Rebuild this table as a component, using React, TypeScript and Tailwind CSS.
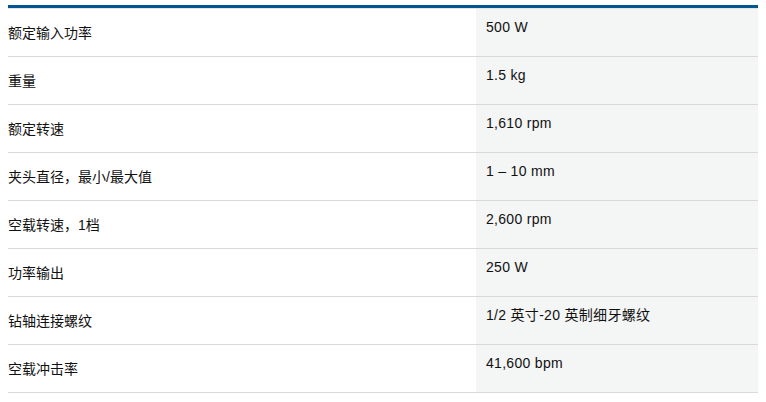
const specs = [
  { label: "额定输入功率", value: "500 W" },
  { label: "重量", value: "1.5 kg" },
  { label: "额定转速", value: "1,610 rpm" },
  { label: "夹头直径，最小/最大值", value: "1 – 10 mm" },
  { label: "空载转速，1档", value: "2,600 rpm" },
  { label: "功率输出", value: "250 W" },
  { label: "钻轴连接螺纹", value: "1/2 英寸-20 英制细牙螺纹" },
  { label: "空载冲击率", value: "41,600 bpm" },
];

export default function App() {
  return (
    <div className="min-h-screen bg-white pt-[5px] pl-[8px] font-['Liberation_Sans','Noto_Sans_CJK_SC',sans-serif] text-[14px] text-[#111]">
      <div className="w-[750px] border-t-[3px] border-[#005691]">
        <div className="border-t border-[#e4e4e4]">
          {specs.map((row) => (
            <div key={row.label} className="grid h-12 grid-cols-[468px_282px] border-b border-[#d9d9d9]">
              <div className="flex items-center leading-5">{row.label}</div>
              <div className="bg-[#f4f5f5] pl-[10px] pt-[8px] leading-5 tracking-[0.3px]">{row.value}</div>
            </div>
          ))}
        </div>
      </div>
    </div>
  );
}
